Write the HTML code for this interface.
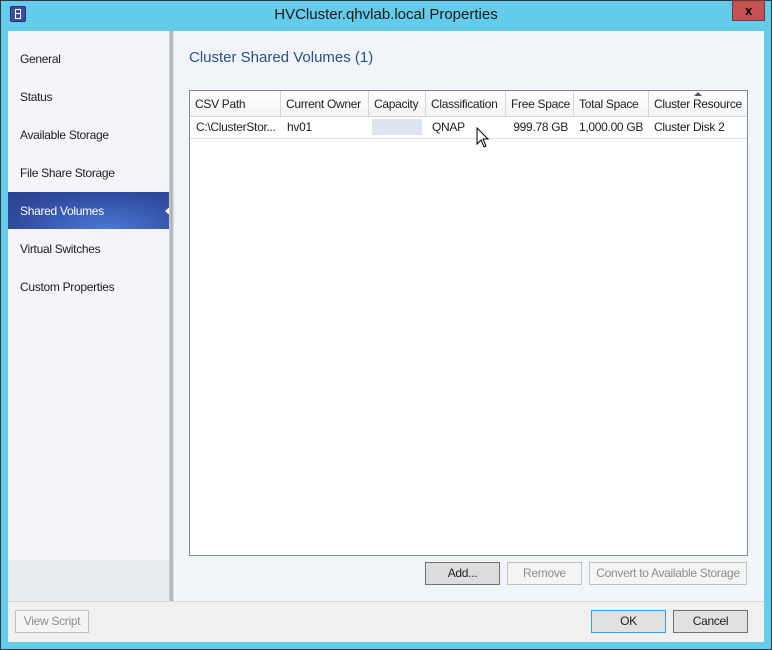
<!DOCTYPE html>
<html><head><style>
*{box-sizing:border-box;margin:0;padding:0}
body{width:772px;height:650px;position:relative;font-family:"Liberation Sans",sans-serif;font-size:12px;letter-spacing:-0.3px;color:#1e1e1e;overflow:hidden;background:#65cbea}
.abs{position:absolute}
.frame{left:0;top:0;width:772px;height:650px;border:1px solid #2b3a44;background:#65cbea}
.title{left:0;top:6px;width:772px;text-align:center;font-size:15px;color:#1a1a1a;letter-spacing:0}
.close{left:732px;top:0;width:33px;height:21px;background:#c75050;border:1px solid #6b3a3a;color:#000;font-weight:bold;text-align:center;font-size:13px;line-height:19px}
.nav{left:8px;top:31px;width:164px;height:570px;background:#f3f5f8}
.sep{left:169px;top:31px;width:5px;height:570px;background:linear-gradient(90deg,#d0d3d6,#a9acb0,#e2e5e8)}
.main{left:174px;top:31px;width:590px;height:570px;background:#f1f4f8}
.item{left:20px;font-size:12px}
.sel{left:8px;top:192px;width:164px;height:37px;background:radial-gradient(ellipse at 60% 100%,#4a77d6,#2f4a9c 70%,#2a418c)}
.footer{left:8px;top:601px;width:756px;height:41px;background:#f0f0f0;border-top:1px solid #d8d8d8}
.btn{height:23px;border:1px solid #adadad;background:#e1e1e1;text-align:center;line-height:21px;font-size:12px}
.dis{background:#f4f4f4;border-color:#bfbfbf;color:#8d8d8d}
.table{left:189px;top:90px;width:559px;height:466px;background:#fff;border:1px solid #828790}
.th{top:0;height:26px;line-height:26px;padding-left:5px;background:linear-gradient(#fff,#f3f3f3);border-right:1px solid #d5d5d5;border-bottom:1px solid #d5d5d5;white-space:nowrap;overflow:hidden}
.td{top:26px;height:21px;line-height:20px;padding-left:6px;white-space:nowrap}
</style></head><body>
<div class="abs frame"></div>
<div class="abs" style="left:10px;top:6px;width:16px;height:16px;background:#3a4fa0;border:1px solid #223070;border-radius:2px"><div style="position:absolute;left:4px;top:2px;width:6px;height:10px;border:1px solid #fff"></div><div style="position:absolute;left:4px;top:6px;width:6px;height:1px;background:#fff"></div></div>
<div class="abs title">HVCluster.qhvlab.local Properties</div>
<div class="abs close">x</div>
<div class="abs nav"></div>
<div class="abs" style="left:8px;top:560px;width:164px;height:41px;background:#e8ecef"></div>
<div class="abs sel"></div>
<div class="abs" style="left:165px;top:204px;width:0;height:0;border-top:7px solid transparent;border-bottom:7px solid transparent;border-right:8px solid #fff"></div>
<div class="abs item" style="top:52px">General</div>
<div class="abs item" style="top:90px">Status</div>
<div class="abs item" style="top:128px">Available Storage</div>
<div class="abs item" style="top:166px">File Share Storage</div>
<div class="abs item" style="top:204px;color:#fff">Shared Volumes</div>
<div class="abs item" style="top:242px">Virtual Switches</div>
<div class="abs item" style="top:280px">Custom Properties</div>
<div class="abs sep"></div>
<div class="abs main"></div>
<div class="abs" style="left:189px;top:49px;font-size:15px;color:#2c4e8c;letter-spacing:0">Cluster Shared Volumes (1)</div>
<div class="abs table">
<div class="abs th" style="left:0;width:91px">CSV Path</div>
<div class="abs th" style="left:91px;width:88px">Current Owner</div>
<div class="abs th" style="left:179px;width:57px">Capacity</div>
<div class="abs th" style="left:236px;width:80px">Classification</div>
<div class="abs th" style="left:316px;width:68px">Free Space</div>
<div class="abs th" style="left:384px;width:75px">Total Space</div>
<div class="abs th" style="left:459px;width:98px;border-right:none">Cluster Resource</div>
<div class="abs" style="left:504px;top:1px;width:0;height:0;border-left:4px solid transparent;border-right:4px solid transparent;border-bottom:4px solid #555"></div>
<div class="abs" style="left:0;top:47px;width:557px;height:1px;background:#e0e0e0"></div>
<div class="abs td" style="left:0">C:\ClusterStor...</div>
<div class="abs td" style="left:91px">hv01</div>
<div class="abs" style="left:182px;top:28px;width:50px;height:16px;background:#dbe4ef"></div>
<div class="abs td" style="left:236px">QNAP</div>
<div class="abs td" style="left:316px;width:62px;text-align:right;padding:0">999.78 GB</div>
<div class="abs td" style="left:384px;padding-left:5px">1,000.00 GB</div>
<div class="abs td" style="left:459px;padding-left:5px">Cluster Disk 2</div>
</div>
<svg class="abs" style="left:476px;top:127px" width="14" height="22" viewBox="0 0 14 22"><path d="M1 1 L1 17 L5 13 L8 20 L10 19 L7 12 L12 12 Z" fill="#fff" stroke="#000" stroke-width="1"/></svg>
<div class="abs btn" style="left:425px;top:562px;width:75px;border-color:#707070;background:#dcdcdc">Add...</div>
<div class="abs btn dis" style="left:507px;top:562px;width:75px">Remove</div>
<div class="abs btn dis" style="left:589px;top:562px;width:158px">Convert to Available Storage</div>
<div class="abs footer"></div>
<div class="abs btn dis" style="left:15px;top:610px;width:74px">View Script</div>
<div class="abs btn" style="left:591px;top:610px;width:75px;border-color:#3c9ae8">OK</div>
<div class="abs btn" style="left:673px;top:610px;width:75px;border-color:#707070">Cancel</div>
</body></html>
